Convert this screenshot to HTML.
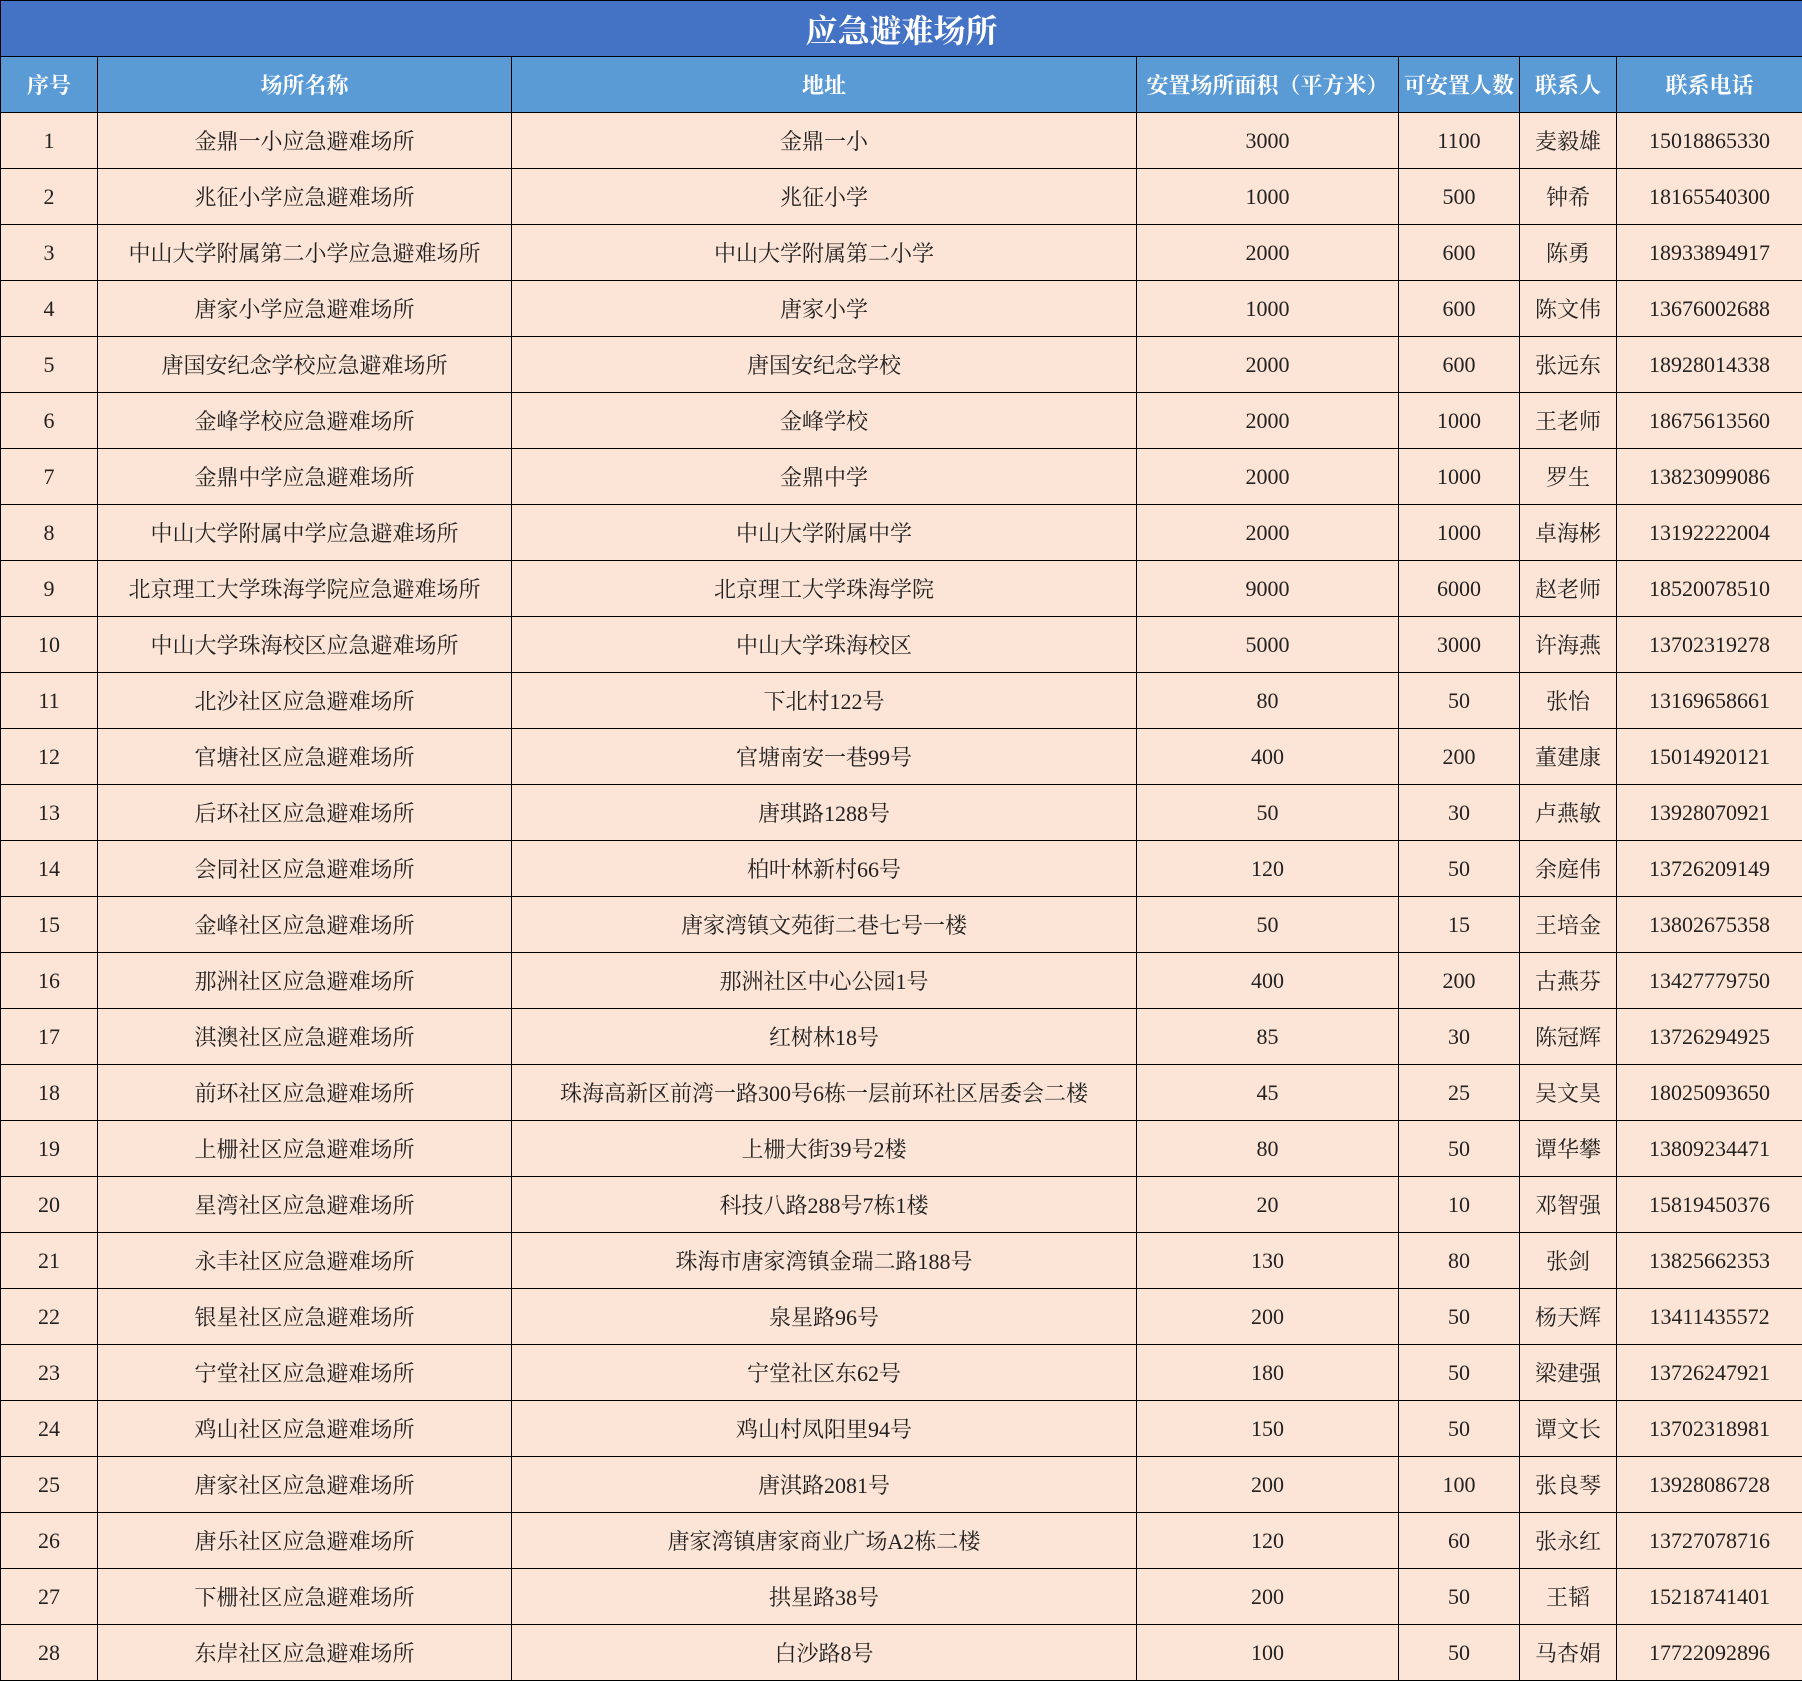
<!DOCTYPE html>
<html><head><meta charset="utf-8"><style>
html,body{margin:0;padding:0;background:#fce4d6;}
body{width:1802px;height:1681px;overflow:hidden;}
table{border-collapse:collapse;table-layout:fixed;width:1802px;font-family:"Liberation Serif","Noto Serif CJK SC",serif;}
td,th{border:1.5px solid #000;text-align:center;padding:0;height:56px;box-sizing:border-box;font-size:22px;color:#222;background:#fce4d6;font-weight:normal;white-space:nowrap;overflow:hidden;}
tr.t td{background:#4472c4;color:#fff;font-size:32px;font-weight:bold;height:56px;}
tr.h th{background:#5b9bd5;color:#fff;font-size:22px;font-weight:bold;}
</style></head><body>
<table>
<colgroup><col style="width:97px"><col style="width:414px"><col style="width:625px"><col style="width:262px"><col style="width:121px"><col style="width:97px"><col style="width:186px"></colgroup>
<tr class="t"><td colspan="7">应急避难场所</td></tr>
<tr class="h"><th>序号</th><th>场所名称</th><th>地址</th><th>安置场所面积（平方米）</th><th>可安置人数</th><th>联系人</th><th>联系电话</th></tr>
<tr><td>1</td><td>金鼎一小应急避难场所</td><td>金鼎一小</td><td>3000</td><td>1100</td><td>麦毅雄</td><td>15018865330</td></tr>
<tr><td>2</td><td>兆征小学应急避难场所</td><td>兆征小学</td><td>1000</td><td>500</td><td>钟希</td><td>18165540300</td></tr>
<tr><td>3</td><td>中山大学附属第二小学应急避难场所</td><td>中山大学附属第二小学</td><td>2000</td><td>600</td><td>陈勇</td><td>18933894917</td></tr>
<tr><td>4</td><td>唐家小学应急避难场所</td><td>唐家小学</td><td>1000</td><td>600</td><td>陈文伟</td><td>13676002688</td></tr>
<tr><td>5</td><td>唐国安纪念学校应急避难场所</td><td>唐国安纪念学校</td><td>2000</td><td>600</td><td>张远东</td><td>18928014338</td></tr>
<tr><td>6</td><td>金峰学校应急避难场所</td><td>金峰学校</td><td>2000</td><td>1000</td><td>王老师</td><td>18675613560</td></tr>
<tr><td>7</td><td>金鼎中学应急避难场所</td><td>金鼎中学</td><td>2000</td><td>1000</td><td>罗生</td><td>13823099086</td></tr>
<tr><td>8</td><td>中山大学附属中学应急避难场所</td><td>中山大学附属中学</td><td>2000</td><td>1000</td><td>卓海彬</td><td>13192222004</td></tr>
<tr><td>9</td><td>北京理工大学珠海学院应急避难场所</td><td>北京理工大学珠海学院</td><td>9000</td><td>6000</td><td>赵老师</td><td>18520078510</td></tr>
<tr><td>10</td><td>中山大学珠海校区应急避难场所</td><td>中山大学珠海校区</td><td>5000</td><td>3000</td><td>许海燕</td><td>13702319278</td></tr>
<tr><td>11</td><td>北沙社区应急避难场所</td><td>下北村122号</td><td>80</td><td>50</td><td>张怡</td><td>13169658661</td></tr>
<tr><td>12</td><td>官塘社区应急避难场所</td><td>官塘南安一巷99号</td><td>400</td><td>200</td><td>董建康</td><td>15014920121</td></tr>
<tr><td>13</td><td>后环社区应急避难场所</td><td>唐琪路1288号</td><td>50</td><td>30</td><td>卢燕敏</td><td>13928070921</td></tr>
<tr><td>14</td><td>会同社区应急避难场所</td><td>柏叶林新村66号</td><td>120</td><td>50</td><td>余庭伟</td><td>13726209149</td></tr>
<tr><td>15</td><td>金峰社区应急避难场所</td><td>唐家湾镇文苑街二巷七号一楼</td><td>50</td><td>15</td><td>王培金</td><td>13802675358</td></tr>
<tr><td>16</td><td>那洲社区应急避难场所</td><td>那洲社区中心公园1号</td><td>400</td><td>200</td><td>古燕芬</td><td>13427779750</td></tr>
<tr><td>17</td><td>淇澳社区应急避难场所</td><td>红树林18号</td><td>85</td><td>30</td><td>陈冠辉</td><td>13726294925</td></tr>
<tr><td>18</td><td>前环社区应急避难场所</td><td>珠海高新区前湾一路300号6栋一层前环社区居委会二楼</td><td>45</td><td>25</td><td>吴文昊</td><td>18025093650</td></tr>
<tr><td>19</td><td>上栅社区应急避难场所</td><td>上栅大街39号2楼</td><td>80</td><td>50</td><td>谭华攀</td><td>13809234471</td></tr>
<tr><td>20</td><td>星湾社区应急避难场所</td><td>科技八路288号7栋1楼</td><td>20</td><td>10</td><td>邓智强</td><td>15819450376</td></tr>
<tr><td>21</td><td>永丰社区应急避难场所</td><td>珠海市唐家湾镇金瑞二路188号</td><td>130</td><td>80</td><td>张剑</td><td>13825662353</td></tr>
<tr><td>22</td><td>银星社区应急避难场所</td><td>泉星路96号</td><td>200</td><td>50</td><td>杨天辉</td><td>13411435572</td></tr>
<tr><td>23</td><td>宁堂社区应急避难场所</td><td>宁堂社区东62号</td><td>180</td><td>50</td><td>梁建强</td><td>13726247921</td></tr>
<tr><td>24</td><td>鸡山社区应急避难场所</td><td>鸡山村凤阳里94号</td><td>150</td><td>50</td><td>谭文长</td><td>13702318981</td></tr>
<tr><td>25</td><td>唐家社区应急避难场所</td><td>唐淇路2081号</td><td>200</td><td>100</td><td>张良琴</td><td>13928086728</td></tr>
<tr><td>26</td><td>唐乐社区应急避难场所</td><td>唐家湾镇唐家商业广场A2栋二楼</td><td>120</td><td>60</td><td>张永红</td><td>13727078716</td></tr>
<tr><td>27</td><td>下栅社区应急避难场所</td><td>拱星路38号</td><td>200</td><td>50</td><td>王韬</td><td>15218741401</td></tr>
<tr><td>28</td><td>东岸社区应急避难场所</td><td>白沙路8号</td><td>100</td><td>50</td><td>马杏娟</td><td>17722092896</td></tr>
</table>
</body></html>
